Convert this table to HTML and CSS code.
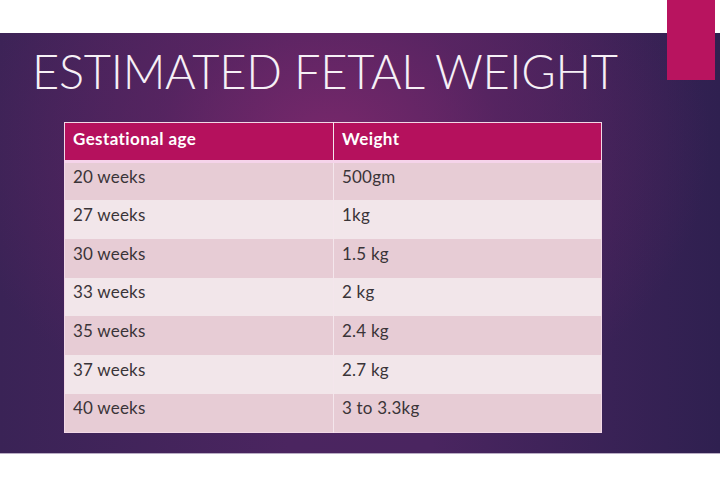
FILE: index.html
```html
<!DOCTYPE html>
<html>
<head>
<meta charset="utf-8">
<link rel="stylesheet" href="styles.css">
</head>
<body>
<div class="page">
  <div class="topband"></div>
  <section class="slide">
    <h1 class="title">ESTIMATED FETAL WEIGHT</h1>
    <table class="grid">
      <thead>
        <tr><th>Gestational age</th><th>Weight</th></tr>
      </thead>
      <tbody>
        <tr><td>20 weeks</td><td>500gm</td></tr>
        <tr><td>27 weeks</td><td>1kg</td></tr>
        <tr><td>30 weeks</td><td>1.5 kg</td></tr>
        <tr><td>33 weeks</td><td>2 kg</td></tr>
        <tr><td>35 weeks</td><td>2.4 kg</td></tr>
        <tr><td>37 weeks</td><td>2.7 kg</td></tr>
        <tr><td>40 weeks</td><td>3 to 3.3kg</td></tr>
      </tbody>
    </table>
  </section>
  <div class="accent"></div>
</div>
</body>
</html>
```
FILE: styles.css
```css
html, body { margin: 0; padding: 0; background: #fff; }
body { width: 720px; height: 489px; overflow: hidden; font-family: "Lato", "DejaVu Sans", sans-serif; }
.page { position: relative; width: 720px; height: 489px; }
.topband { height: 33px; background: #fff; }
.slide {
  height: 421px;
  box-sizing: border-box;
  padding: 12px 0 0 0;
  background:
    radial-gradient(ellipse 380px 300px at 330px 110px, rgba(125,40,108,0.9) 0%, rgba(100,36,100,0.55) 45%, rgba(60,30,80,0) 100%),
    linear-gradient(90deg, #3a2356 0%, #4b2560 40%, #4a2560 60%, #2f2050 100%);
  border-bottom: 1px solid #b9adc4;
}
.title {
  margin: 0 0 0 32px;
  font-family: "Lato", sans-serif;
  font-weight: 300;
  font-size: 47px;
  line-height: 52px;
  color: #f6f0f6;
  letter-spacing: -0.3px;
  white-space: nowrap;
}
.grid {
  margin: 25px 0 0 64px;
  width: 538px;
  border-collapse: collapse;
  font-family: "Lato", "DejaVu Sans", sans-serif;
  font-size: 17px;
  border: 1px solid #f2d8e6;
}
.grid th {
  background: #b5115d;
  color: #fff;
  font-weight: 700;
  text-align: left;
  height: 39px;
  padding: 0 8px 6px;
  box-sizing: border-box;
  vertical-align: middle;
  letter-spacing: 0.4px;
  border-bottom: 3px solid #f6d4ea;
}
.grid th + th, .grid td + td { border-left: 1px solid #f4e6ec; }
.grid th:first-child, .grid td:first-child { width: 269px; }
.grid td {
  height: 38.7px;
  box-sizing: border-box;
  padding: 0 8px 10px;
  color: #3a3438;
  vertical-align: middle;
  letter-spacing: 0.2px;
}
.grid tbody tr:nth-child(odd) td { background: #e7ccd5; }
.grid tbody tr:nth-child(even) td { background: #f2e6ea; }
.accent {
  position: absolute;
  left: 667px;
  top: 0;
  width: 48px;
  height: 80px;
  background: #b8145f;
}
```
